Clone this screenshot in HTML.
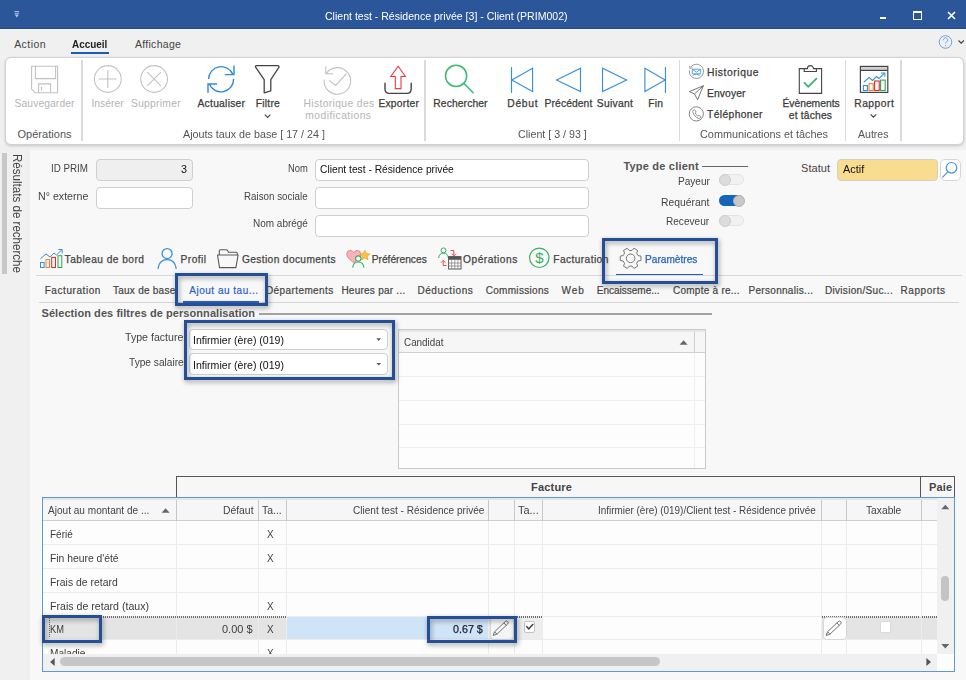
<!DOCTYPE html>
<html lang="fr"><head><meta charset="utf-8"><title>Client test - Résidence privée [3] - Client (PRIM002)</title>
<style>
html,body{margin:0;padding:0;}
body{width:966px;height:680px;overflow:hidden;background:#f0f0f0;font-family:"Liberation Sans",sans-serif;}
#app{position:relative;width:966px;height:680px;overflow:hidden;background:#f0f0f0;}
.t{position:absolute;white-space:nowrap;line-height:1;transform-origin:0 50%;}
.a{position:absolute;}
svg{position:absolute;overflow:visible;}
.inp{position:absolute;box-sizing:border-box;border:1px solid #cfcfcf;border-radius:4px;background:#fff;}
.hl{position:absolute;box-sizing:border-box;border:3px solid #244f96;filter:drop-shadow(1px 2.500px 2.500px rgba(0,0,0,.4));}
.sb{-webkit-text-stroke:0.25px currentColor;}
.sb2{-webkit-text-stroke:0.2px currentColor;}
.dot{background:repeating-linear-gradient(90deg,#6e6e6e 0,#6e6e6e 1px,transparent 1px,transparent 2px);}
.dotv{background:repeating-linear-gradient(180deg,#6e6e6e 0,#6e6e6e 1px,transparent 1px,transparent 2px);}

</style></head>
<body>
<div id="app">
<div class="a" style="left:0;top:0;width:966px;height:29px;background:#2b579a;box-sizing:border-box;border-bottom:1px solid #214c8e"></div>
<div class="a" style="left:0;top:29px;width:966px;height:1px;background:#f8f8f8"></div>
<svg style="left:14px;top:10.5px" width="6" height="7" viewBox="0 0 6 7"><path d="M0.5 0.5h4.6M0.5 2.3h4.6" stroke="#b9c6de" stroke-width="0.9" fill="none"/><path d="M0.7 3.6h4.200l-2.100 2.800z" fill="#b9c6de"/></svg>
<span class="t" style="left:324.5px;top:11.0px;font-size:11px;color:#fff;transform:scaleX(0.9582);">Client test - Résidence privée [3] - Client (PRIM002)</span>
<div class="a" style="left:879.800px;top:16.500px;width:6.400px;height:2.200px;background:#fff"></div>
<div class="a" style="left:913px;top:11.200px;width:9.200px;height:8.800px;box-sizing:border-box;border:1.200px solid #fff;border-top-width:2px"></div>
<svg style="left:946.700px;top:11.200px" width="9" height="9" viewBox="0 0 9 9"><path d="M1 1l7 7M8 1l-7 7" stroke="#fff" stroke-width="1.6" fill="none"/></svg>
<span class="t" style="left:14.2px;top:38.9px;font-size:10.5px;color:#444;letter-spacing:0.424px;">Action</span>
<span class="t" style="left:72.0px;top:38.9px;font-size:10.5px;color:#222;transform:scaleX(0.9452);font-weight:bold;">Accueil</span>
<span class="t" style="left:134.9px;top:38.9px;font-size:10.5px;color:#444;letter-spacing:0.302px;">Affichage</span>
<div class="a" style="left:71px;top:51.6px;width:38px;height:2px;background:#185abd"></div>
<svg style="left:937.500px;top:33.500px" width="28" height="16" viewBox="0 0 28 16"><circle cx="7.5" cy="8" r="6.3" fill="none" stroke="#6aa7e0" stroke-width="1"/><path d="M5.3 6.3c0-1.5 1-2.4 2.3-2.4s2.2.9 2.2 2.1c0 1.6-2.1 1.8-2.1 3.6" fill="none" stroke="#6aa7e0" stroke-width="1"/><circle cx="7.6" cy="11.6" r=".7" fill="#6aa7e0"/><path d="M20.5 6.5l2.7 2.7 2.7-2.7" fill="none" stroke="#444" stroke-width="1.1"/></svg>
<div class="a" style="left:5px;top:57px;width:958.500px;height:88px;box-sizing:border-box;background:#fff;border:1px solid #d2d2d2;border-radius:6px;box-shadow:0 1px 3px rgba(0,0,0,.18)"></div>
<div class="a" style="left:81.2px;top:60px;width:1.500px;height:81px;background:#dadada"></div>
<div class="a" style="left:424.2px;top:60px;width:1.500px;height:81px;background:#dadada"></div>
<div class="a" style="left:678.7px;top:60px;width:1.500px;height:81px;background:#dadada"></div>
<div class="a" style="left:844.7px;top:60px;width:1.500px;height:81px;background:#dadada"></div>
<div class="a" style="left:900.2px;top:60px;width:1.500px;height:81px;background:#dadada"></div>
<span class="t" style="left:14.5px;top:98.7px;font-size:10.3px;color:#b4b4b4;letter-spacing:0.103px;">Sauvegarder</span>
<span class="t" style="left:91.4px;top:98.7px;font-size:10.3px;color:#b4b4b4;letter-spacing:0.041px;">Insérer</span>
<span class="t" style="left:131.0px;top:98.7px;font-size:10.3px;color:#b4b4b4;letter-spacing:0.261px;">Supprimer</span>
<span class="t sb" style="left:197.5px;top:98.7px;font-size:10.3px;color:#3a3a3a;letter-spacing:0.253px;">Actualiser</span>
<span class="t sb" style="left:255.7px;top:98.7px;font-size:10.3px;color:#3a3a3a;letter-spacing:0.243px;">Filtre</span>
<span class="t" style="left:303.4px;top:98.7px;font-size:10.3px;color:#b4b4b4;letter-spacing:0.382px;">Historique des</span>
<span class="t" style="left:305.3px;top:110.7px;font-size:10.3px;color:#b4b4b4;letter-spacing:0.466px;">modifications</span>
<span class="t sb" style="left:378.4px;top:98.7px;font-size:10.3px;color:#3a3a3a;letter-spacing:0.225px;">Exporter</span>
<span class="t sb" style="left:433.3px;top:98.7px;font-size:10.3px;color:#3a3a3a;letter-spacing:0.107px;">Rechercher</span>
<span class="t sb" style="left:507.3px;top:98.7px;font-size:10.3px;color:#3a3a3a;letter-spacing:0.704px;">Début</span>
<span class="t sb" style="left:544.6px;top:98.7px;font-size:10.3px;color:#3a3a3a;letter-spacing:0.094px;">Précédent</span>
<span class="t sb" style="left:596.8px;top:98.7px;font-size:10.3px;color:#3a3a3a;letter-spacing:0.274px;">Suivant</span>
<span class="t sb" style="left:648.2px;top:98.7px;font-size:10.3px;color:#3a3a3a;letter-spacing:0.296px;">Fin</span>
<span class="t sb" style="left:707.0px;top:67.9px;font-size:10.3px;color:#3a3a3a;letter-spacing:0.570px;">Historique</span>
<span class="t sb" style="left:707.0px;top:88.9px;font-size:10.3px;color:#3a3a3a;letter-spacing:0.119px;">Envoyer</span>
<span class="t sb" style="left:707.0px;top:109.9px;font-size:10.3px;color:#3a3a3a;letter-spacing:0.377px;">Téléphoner</span>
<span class="t sb" style="left:782.4px;top:98.9px;font-size:10.3px;color:#3a3a3a;letter-spacing:0.006px;">Évènements</span>
<span class="t sb" style="left:788.8px;top:111.1px;font-size:10.3px;color:#3a3a3a;letter-spacing:0.176px;">et tâches</span>
<span class="t sb" style="left:854.2px;top:98.9px;font-size:10.3px;color:#3a3a3a;letter-spacing:0.510px;">Rapport</span>
<span class="t" style="left:17.4px;top:129.0px;font-size:11px;color:#555;letter-spacing:0.044px;">Opérations</span>
<span class="t" style="left:182.6px;top:129.0px;font-size:11px;color:#555;transform:scaleX(0.9751);">Ajouts taux de base [ 17 / 24 ]</span>
<span class="t" style="left:518.0px;top:129.0px;font-size:11px;color:#555;transform:scaleX(0.9701);">Client [ 3 / 93 ]</span>
<span class="t" style="left:699.5px;top:129.0px;font-size:11px;color:#555;transform:scaleX(0.9876);">Communications et tâches</span>
<span class="t" style="left:858.3px;top:129.0px;font-size:11px;color:#555;transform:scaleX(0.9594);">Autres</span>
<div class="a" style="left:1.500px;top:153px;width:5px;height:121px;background:#c8c8c8"></div>
<span class="t" style="left:10px;top:154.400px;font-size:13px;color:#444;writing-mode:vertical-rl;line-height:15px;width:15px;transform:scaleY(0.890);transform-origin:50% 0">Résultats de recherche</span>
<div class="a" style="left:30px;top:150px;width:936px;height:530px;background:#f8f8f8"></div>
<svg style="left:28px;top:62px" width="34" height="34" viewBox="28 62 34 34"><g fill="none" stroke="#c2c2c2" stroke-width="1.1"><path d="M31.6 66.3h26v26.4h-22.4l-3.6-3.6z"/><path d="M35.4 66.3v12.3h20.2v-12.3"/><path d="M38.6 92.7v-8.8h12v8.8"/><path d="M41.5 87v3.6"/></g></svg>
<svg style="left:92px;top:62px" width="80" height="34" viewBox="92 62 80 34"><g fill="none" stroke="#c2c2c2" stroke-width="1.1"><circle cx="107.8" cy="79" r="13.4"/><path d="M98.8 79h17.8M107.8 70.1v17.8"/><circle cx="154.1" cy="79" r="13.4"/><path d="M147.3 72.2l13.7 13.7M161 72.2l-13.7 13.7"/></g></svg>
<svg style="left:204px;top:62px" width="34" height="34" viewBox="204 62 34 34"><g fill="none" stroke="#2a8ad8" stroke-width="1.4"><path d="M208.6 79a12.6 12.6 0 0 1 24.3-4.4"/><path d="M224.8 74.6h9.2v-9.1"/><path d="M233.6 79a12.6 12.6 0 0 1 -24.3 4.9"/><path d="M217 84h-9v8.8"/></g></svg>
<svg style="left:252px;top:62px" width="30" height="34" viewBox="252 62 30 34"><path d="M256.8 65.6h20.8q1.6 0 1.4 1.6l-8.2 12.4v11.2l-6.6 2v-13.2l-8.6-12.4q-.6-1.6 1.2-1.6z" fill="none" stroke="#454545" stroke-width="1.3" stroke-linejoin="round"/></svg>
<svg style="left:322px;top:62px" width="32" height="34" viewBox="322 62 32 34"><g fill="none" stroke="#c2c2c2" stroke-width="1.1"><path d="M326.2 73.6a13.3 13.3 0 1 1 -2.1 5.9"/><path d="M325.8 66.3v7.4h7.3"/><path d="M329 80.4l6.7 5 10.8-11.7"/></g></svg>
<svg style="left:382px;top:62px" width="32" height="34" viewBox="382 62 32 34"><path d="M385 82.8v6.2q0 4.4 4.4 4.4h17.4q4.4 0 4.4-4.4v-6.2" fill="none" stroke="#444" stroke-width="1.4"/><path d="M398.2 66.2l7.2 10.3h-4.4v12.1h-5.7v-12.1h-4.5z" fill="none" stroke="#ee3a3a" stroke-width="1.1" stroke-linejoin="miter"/></svg>
<svg style="left:442px;top:62px" width="34" height="34" viewBox="442 62 34 34"><g fill="none" stroke="#3cb878" stroke-width="1.5"><circle cx="456.1" cy="75.9" r="10.6"/><path d="M463.8 83.2l9.8 10"/></g></svg>
<svg style="left:506px;top:62px" width="164" height="34" viewBox="506 62 164 34"><g fill="none" stroke="#3a90d8" stroke-width="1.15" stroke-linejoin="miter"><path d="M511.5 67v26"/><path d="M511.8 79.9l20.8-11.7v23.3z"/><path d="M556.6 79.9l23.9-11.7v23.3z"/><path d="M626.6 79.9l-24.1-11.7v23.3z"/><path d="M665.5 67v26"/><path d="M665.2 79.9l-20.3-11.7v23.3z"/></g></svg>
<svg style="left:686px;top:62px" width="22" height="62" viewBox="686 62 22 62"><g fill="none" stroke="#8a8a8a" stroke-width="0.9"><path d="M690.6 67.3a7.1 7.1 0 1 1 -1.2 3"/><path d="M689.6 65.8l.4 2.6 2.6-.5"/></g><g fill="none" stroke="#58a6e0" stroke-width="1"><path d="M692.3 69.2h8.4v4.6h-8.4z"/><path d="M692.3 69.4l4.2 2.6 4.2-2.6"/><path d="M692.6 75.2q3.5-2 7.6 0"/></g><path d="M689.4 91.6l14-5.9-5.8 14.1-3.1-5.8zM694.5 94l8.9-8.3" fill="none" stroke="#666" stroke-width="0.9" stroke-linejoin="round"/><circle cx="696.3" cy="113.9" r="7.1" fill="none" stroke="#777" stroke-width="0.9"/><path d="M693.4 110.2q1-1 1.7 0l.7 1.5q.2.8-.6 1.3q.8 2 2.6 3q.6-.8 1.4-.5l1.4.8q.7.8-.2 1.6q-1.4 1.2-3.600-.2q-3.200-2-4-5.800q-.2-1 .6-1.700z" fill="none" stroke="#777" stroke-width="0.8"/></svg>
<svg style="left:796px;top:60px" width="30" height="36" viewBox="796 60 30 36"><g fill="none" stroke="#444" stroke-width="1.1"><path d="M804.2 68.6h-4.9v24.8h22.3v-24.8h-5.2"/><path d="M804.2 71.5v-2.900h3.200a3 3 0 0 1 6 0h3v2.900z"/></g><path d="M804 82.200l4.200 4.600 8.700-8.600" fill="none" stroke="#2db55d" stroke-width="1.7"/></svg>
<svg style="left:858px;top:62px" width="32" height="34" viewBox="858 62 32 34"><rect x="860.4" y="66.400" width="27.400" height="4" fill="#cfcfcf"/><g fill="none" stroke="#444" stroke-width="1.2"><rect x="860.4" y="66.400" width="27.400" height="26"/><path d="M860.4 70.400h27.400"/></g><g fill="none" stroke-width="1.1"><rect x="863.4" y="85.600" width="4" height="4.900" stroke="#3a90d8"/><rect x="869" y="83.700" width="4.200" height="6.800" stroke="#f08030"/><rect x="874.600" y="81" width="4.600" height="9.500" stroke="#e02828"/><rect x="880.600" y="80.100" width="4.600" height="10.400" stroke="#2da84f"/><path d="M863.8 82.200l5.200-4.700 3.500 3 4-4 2.500 2 5.500-5.300" stroke="#3a90d8"/><path d="M881 73h3.800v3.800" stroke="#3a90d8"/></g></svg>
<svg style="left:262px;top:112px" width="12" height="8" viewBox="262 112 12 8"><path d="M264.8 114.600l2.800 2.800 2.800-2.800" fill="none" stroke="#444" stroke-width="1.100"/></svg>
<svg style="left:868px;top:112px" width="12" height="8" viewBox="868 112 12 8"><path d="M870.6 114.400l2.800 2.800 2.800-2.800" fill="none" stroke="#444" stroke-width="1.100"/></svg>
<div class="inp" style="left:96px;top:159px;width:97px;height:22px;background:#efefef;"></div>
<div class="inp" style="left:96px;top:187px;width:97px;height:22px;background:#fff;"></div>
<div class="inp" style="left:315px;top:159px;width:274px;height:22px;background:#fff;"></div>
<div class="inp" style="left:315px;top:187px;width:274px;height:22px;background:#fff;"></div>
<div class="inp" style="left:315px;top:215px;width:274px;height:22px;background:#fff;"></div>
<span class="t" style="left:51.4px;top:163.0px;font-size:11px;color:#444;transform:scaleX(0.8904);">ID PRIM</span>
<span class="t" style="left:180.6px;top:164.2px;font-size:11px;color:#111;transform:scaleX(0.9809);">3</span>
<span class="t" style="left:38.0px;top:190.7px;font-size:11px;color:#444;transform:scaleX(0.9676);">N° externe</span>
<span class="t" style="left:288.0px;top:163.0px;font-size:11px;color:#444;transform:scaleX(0.8526);">Nom</span>
<span class="t" style="left:320.4px;top:164.3px;font-size:11px;color:#111;transform:scaleX(0.9313);">Client test - Résidence privée</span>
<span class="t" style="left:244.2px;top:190.7px;font-size:11px;color:#444;transform:scaleX(0.8891);">Raison sociale</span>
<span class="t" style="left:252.9px;top:218.3px;font-size:11px;color:#444;transform:scaleX(0.9070);">Nom abrégé</span>
<span class="t" style="left:623.4px;top:160.5px;font-size:11px;color:#555;letter-spacing:0.205px;font-weight:bold;">Type de client</span>
<div class="a" style="left:701.500px;top:165.700px;width:46px;height:1px;background:#666"></div>
<span class="t" style="left:677.5px;top:175.9px;font-size:11px;color:#444;transform:scaleX(0.9153);">Payeur</span>
<span class="t" style="left:661.4px;top:196.5px;font-size:11px;color:#444;transform:scaleX(0.9423);">Requérant</span>
<span class="t" style="left:666.3px;top:216.4px;font-size:11px;color:#444;transform:scaleX(0.9156);">Receveur</span>
<div class="a" style="left:718.5px;top:174.2px;width:25px;height:11px;border-radius:6px;background:#f1f1f1;box-sizing:border-box;border:1px solid #e4e4e4"></div>
<div class="a" style="left:718.5px;top:173.7px;width:12px;height:12px;border-radius:6px;background:#dcdcdc;box-sizing:border-box;border:1px solid #cdcdcd"></div>
<div class="a" style="left:718.5px;top:195.2px;width:25px;height:11px;border-radius:6px;background:#1565b8"></div>
<div class="a" style="left:732.5px;top:194.7px;width:12px;height:12px;border-radius:6px;background:#c8c8c8;box-sizing:border-box;border:1px solid #b5b5b5"></div>
<div class="a" style="left:718.5px;top:215.1px;width:25px;height:11px;border-radius:6px;background:#f1f1f1;box-sizing:border-box;border:1px solid #e4e4e4"></div>
<div class="a" style="left:718.5px;top:214.6px;width:12px;height:12px;border-radius:6px;background:#dcdcdc;box-sizing:border-box;border:1px solid #cdcdcd"></div>
<span class="t" style="left:801.0px;top:163.0px;font-size:11px;color:#444;letter-spacing:0.052px;">Statut</span>
<div class="inp" style="left:837px;top:159px;width:100.5px;height:21.5px;background:#f8dc8f;border-color:#d2d0c8"></div>
<span class="t" style="left:842.7px;top:164.0px;font-size:11px;color:#111;transform:scaleX(0.9910);">Actif</span>
<div class="inp" style="left:939.5px;top:159px;width:21.0px;height:22px;background:#fff;border-radius:5px;border-color:#d6d6d6"></div>
<svg style="left:940px;top:160px" width="20" height="20" viewBox="940 160 20 20"><g fill="none" stroke="#4a8fd0" stroke-width="1.2"><circle cx="951.500" cy="167.800" r="5.300"/><path d="M947.800 171.800l-5.400 5.600"/></g></svg>
<span class="t sb" style="left:64.6px;top:254.6px;font-size:10.2px;color:#444;letter-spacing:0.453px;">Tableau de bord</span>
<span class="t sb" style="left:180.6px;top:254.6px;font-size:10.2px;color:#444;letter-spacing:0.432px;">Profil</span>
<span class="t sb" style="left:242.0px;top:254.6px;font-size:10.2px;color:#444;letter-spacing:0.364px;">Gestion documents</span>
<span class="t sb" style="left:371.7px;top:254.6px;font-size:10.2px;color:#444;letter-spacing:0.011px;">Préférences</span>
<span class="t sb" style="left:463.1px;top:254.6px;font-size:10.2px;color:#444;letter-spacing:0.479px;">Opérations</span>
<span class="t sb" style="left:553.3px;top:254.6px;font-size:10.2px;color:#444;letter-spacing:0.408px;">Facturation</span>
<span class="t sb" style="left:644.5px;top:254.6px;font-size:10.2px;color:#2a62c8;transform:scaleX(0.9940);">Paramètres</span>
<div class="a" style="left:616px;top:273.600px;width:87px;height:2.500px;background:#2a5ab4"></div>
<div class="a" style="left:36px;top:275px;width:926px;height:1px;background:#d9d9d9"></div>
<span class="t sb2" style="left:44.7px;top:286.4px;font-size:10px;color:#444;letter-spacing:0.568px;">Facturation</span>
<span class="t sb2" style="left:113.0px;top:286.4px;font-size:10px;color:#444;letter-spacing:0.247px;">Taux de base</span>
<span class="t sb2" style="left:189.3px;top:286.4px;font-size:10px;color:#2a62c8;letter-spacing:0.507px;">Ajout au tau...</span>
<span class="t sb2" style="left:266.0px;top:286.4px;font-size:10px;color:#444;letter-spacing:0.400px;">Départements</span>
<span class="t sb2" style="left:341.4px;top:286.4px;font-size:10px;color:#444;letter-spacing:0.248px;">Heures par ...</span>
<span class="t sb2" style="left:417.4px;top:286.4px;font-size:10px;color:#444;letter-spacing:0.597px;">Déductions</span>
<span class="t sb2" style="left:485.7px;top:286.4px;font-size:10px;color:#444;letter-spacing:0.309px;">Commissions</span>
<span class="t sb2" style="left:561.5px;top:286.4px;font-size:10px;color:#444;letter-spacing:1.010px;">Web</span>
<span class="t sb2" style="left:596.8px;top:286.4px;font-size:10px;color:#444;letter-spacing:0.000px;">Encaisseme...</span>
<span class="t sb2" style="left:673.0px;top:286.4px;font-size:10px;color:#444;letter-spacing:0.250px;">Compte à re...</span>
<span class="t sb2" style="left:748.5px;top:286.4px;font-size:10px;color:#444;letter-spacing:0.301px;">Personnalis...</span>
<span class="t sb2" style="left:824.9px;top:286.4px;font-size:10px;color:#444;letter-spacing:0.318px;">Division/Suc...</span>
<span class="t sb2" style="left:900.5px;top:286.4px;font-size:10px;color:#444;letter-spacing:0.575px;">Rapports</span>
<div class="a" style="left:39px;top:302px;width:919.500px;height:1px;background:#d4d4d4"></div>
<div class="a" style="left:183px;top:300.5px;width:76px;height:2px;background:#2a5fbe"></div>
<span class="t" style="left:41.5px;top:307.9px;font-size:11px;color:#555;letter-spacing:0.066px;font-weight:bold;">Sélection des filtres de personnalisation</span>
<div class="a" style="left:258.500px;top:313.300px;width:453px;height:1.500px;background:#a2a2a2"></div>
<span class="t" style="left:125.0px;top:332.0px;font-size:11px;color:#444;transform:scaleX(0.9649);">Type facture</span>
<span class="t" style="left:128.7px;top:356.8px;font-size:11px;color:#444;transform:scaleX(0.9224);">Type salaire</span>
<div class="inp" style="left:189px;top:328.8px;width:199px;height:21.19999999999999px;background:#fff;"></div>
<div class="inp" style="left:189px;top:353.4px;width:199px;height:21.200000000000045px;background:#fff;"></div>
<span class="t" style="left:192.5px;top:334.7px;font-size:11px;color:#111;transform:scaleX(0.9606);">Infirmier (ère) (019)</span>
<span class="t" style="left:192.5px;top:360.0px;font-size:11px;color:#111;transform:scaleX(0.9606);">Infirmier (ère) (019)</span>
<svg style="left:374px;top:336px" width="10" height="32" viewBox="374 336 10 32"><path d="M376.400 338.300h4.600l-2.300 2.600zM376.400 362.900h4.600l-2.300 2.600z" fill="#555"/></svg>
<div class="a" style="left:398px;top:329px;width:308px;height:140px;box-sizing:border-box;border:1px solid #c9c9c9;background:#fdfdfd"></div>
<div class="a" style="left:399px;top:330px;width:306px;height:23px;background:#f6f6f6;border-bottom:1px solid #d0d0d0;box-sizing:border-box"></div>
<div class="a" style="left:399px;top:330px;width:306px;height:2px;background:#e6e6e6"></div>
<div class="a" style="left:399px;top:375.8px;width:306px;height:1px;background:#efefef"></div>
<div class="a" style="left:399px;top:399.7px;width:306px;height:1px;background:#efefef"></div>
<div class="a" style="left:399px;top:423.5px;width:306px;height:1px;background:#efefef"></div>
<div class="a" style="left:399px;top:447.3px;width:306px;height:1px;background:#efefef"></div>
<div class="a" style="left:693.5px;top:332px;width:1px;height:21px;background:#cfcfcf"></div>
<div class="a" style="left:693.5px;top:353px;width:1px;height:115px;background:#efefef"></div>
<span class="t" style="left:403.5px;top:336.5px;font-size:11px;color:#444;transform:scaleX(0.8971);">Candidat</span>
<svg style="left:679px;top:338px" width="10" height="8" viewBox="679 338 10 8"><path d="M679.600 344.800l4-4.600 4 4.600z" fill="#666"/></svg>
<div class="a" style="left:176px;top:476px;width:779px;height:21px;box-sizing:border-box;border:1px solid #555;border-bottom:none;background:#f7f7f7"></div>
<div class="a" style="left:920px;top:476px;width:1px;height:21px;background:#555"></div>
<span class="t" style="left:531.1px;top:482.3px;font-size:11px;color:#444;letter-spacing:0.178px;font-weight:bold;">Facture</span>
<span class="t" style="left:929.1px;top:482.3px;font-size:11px;color:#444;letter-spacing:0.124px;font-weight:bold;">Paie</span>
<div class="a" style="left:42px;top:497px;width:913px;height:174.5px;box-sizing:border-box;border:1px solid #5b9bd5;background:#fdfdfd"></div>
<div class="a" style="left:43px;top:498px;width:894px;height:23px;background:#f6f6f6;border-bottom:1px solid #cfcfcf;box-sizing:border-box"></div>
<div class="a" style="left:43px;top:498px;width:894px;height:2px;background:#e4e4e4"></div>
<div class="a" style="left:43px;top:616.5px;width:894px;height:23px;background:#e4e4e4"></div>
<div class="a" style="left:286.5px;top:616.5px;width:202px;height:23px;background:#cfe4f7"></div>
<div class="a" style="left:514.5px;top:616.5px;width:307px;height:23px;background:#fdfdfd"></div>
<div class="a" style="left:514.5px;top:616.5px;width:28px;height:23px;background:#ededed"></div>
<div class="a" style="left:43px;top:544.3px;width:894px;height:1px;background:#ececec"></div>
<div class="a" style="left:43px;top:568.1px;width:894px;height:1px;background:#ececec"></div>
<div class="a" style="left:43px;top:591.9px;width:894px;height:1px;background:#ececec"></div>
<div class="a" style="left:43px;top:615.5px;width:894px;height:1px;background:#ececec"></div>
<div class="a" style="left:43px;top:639.3px;width:894px;height:1px;background:#ececec"></div>
<div class="a" style="left:176.0px;top:500px;width:1px;height:21px;background:#c8c8c8"></div>
<div class="a" style="left:176.0px;top:521px;width:1px;height:132.5px;background:#ececec"></div>
<div class="a" style="left:257.5px;top:500px;width:1px;height:21px;background:#c8c8c8"></div>
<div class="a" style="left:257.5px;top:521px;width:1px;height:132.5px;background:#ececec"></div>
<div class="a" style="left:286.0px;top:500px;width:1px;height:21px;background:#c8c8c8"></div>
<div class="a" style="left:286.0px;top:521px;width:1px;height:132.5px;background:#ececec"></div>
<div class="a" style="left:488.0px;top:500px;width:1px;height:21px;background:#c8c8c8"></div>
<div class="a" style="left:488.0px;top:521px;width:1px;height:132.5px;background:#ececec"></div>
<div class="a" style="left:514.0px;top:500px;width:1px;height:21px;background:#c8c8c8"></div>
<div class="a" style="left:514.0px;top:521px;width:1px;height:132.5px;background:#ececec"></div>
<div class="a" style="left:542.0px;top:500px;width:1px;height:21px;background:#c8c8c8"></div>
<div class="a" style="left:542.0px;top:521px;width:1px;height:132.5px;background:#ececec"></div>
<div class="a" style="left:821.0px;top:500px;width:1px;height:21px;background:#c8c8c8"></div>
<div class="a" style="left:821.0px;top:521px;width:1px;height:132.5px;background:#ececec"></div>
<div class="a" style="left:846.0px;top:500px;width:1px;height:21px;background:#c8c8c8"></div>
<div class="a" style="left:846.0px;top:521px;width:1px;height:132.5px;background:#ececec"></div>
<div class="a" style="left:920.5px;top:500px;width:1px;height:21px;background:#c8c8c8"></div>
<div class="a" style="left:920.5px;top:521px;width:1px;height:132.5px;background:#ececec"></div>
<div class="a dot" style="left:43px;top:616px;width:244px;height:2px"></div>
<div class="a dotv" style="left:48.500px;top:618px;width:1px;height:20px"></div>
<div class="a dot" style="left:515px;top:616px;width:27px;height:2px"></div>
<div class="a dot" style="left:822px;top:616px;width:98px;height:2px"></div><div class="a dot" style="left:922px;top:616px;width:15px;height:2px"></div>
<span class="t" style="left:47.6px;top:505.0px;font-size:11px;color:#444;transform:scaleX(0.9153);">Ajout au montant de ...</span>
<svg style="left:161px;top:506px" width="10" height="8" viewBox="161 506 10 8"><path d="M161.600 512.800l4-4.600 4 4.600z" fill="#666"/></svg>
<span class="t" style="left:222.5px;top:505.0px;font-size:11px;color:#444;transform:scaleX(0.9412);">Défaut</span>
<span class="t" style="left:261.7px;top:505.0px;font-size:11px;color:#444;transform:scaleX(0.9478);">Ta...</span>
<span class="t" style="left:352.6px;top:505.0px;font-size:11px;color:#444;transform:scaleX(0.9146);">Client test - Résidence privée</span>
<span class="t" style="left:518.2px;top:505.0px;font-size:11px;color:#444;transform:scaleX(0.9959);">Ta...</span>
<span class="t" style="left:598.4px;top:505.0px;font-size:11px;color:#444;transform:scaleX(0.9016);">Infirmier (ère) (019)/Client test - Résidence privée</span>
<span class="t" style="left:865.7px;top:505.0px;font-size:11px;color:#444;transform:scaleX(0.9311);">Taxable</span>
<span class="t" style="left:49.5px;top:529.2px;font-size:11px;color:#3c3c3c;transform:scaleX(0.9058);">Férié</span>
<span class="t" style="left:49.5px;top:552.9px;font-size:11px;color:#3c3c3c;transform:scaleX(0.9393);">Fin heure d&#x27;été</span>
<span class="t" style="left:49.5px;top:576.7px;font-size:11px;color:#3c3c3c;transform:scaleX(0.9466);">Frais de retard</span>
<span class="t" style="left:49.5px;top:600.5px;font-size:11px;color:#3c3c3c;transform:scaleX(0.9640);">Frais de retard (taux)</span>
<span class="t" style="left:49.5px;top:623.9px;font-size:11px;color:#3c3c3c;transform:scaleX(0.8424);">KM</span>
<span class="t" style="left:221.5px;top:623.9px;font-size:11px;color:#3c3c3c;transform:scaleX(0.9974);">0.00 $</span>
<span class="t sb" style="left:453.0px;top:623.9px;font-size:11px;color:#1c1c30;transform:scaleX(0.9745);">0.67 $</span>
<span class="t" style="left:267.3px;top:529.2px;font-size:11px;color:#3c3c3c;transform:scaleX(0.8995);">X</span>
<span class="t" style="left:267.3px;top:552.9px;font-size:11px;color:#3c3c3c;transform:scaleX(0.8995);">X</span>
<span class="t" style="left:267.3px;top:600.5px;font-size:11px;color:#3c3c3c;transform:scaleX(0.8995);">X</span>
<span class="t" style="left:267.3px;top:623.9px;font-size:11px;color:#3c3c3c;transform:scaleX(0.8995);">X</span>
<div class="a" style="left:43px;top:640px;width:894px;height:13.5px;overflow:hidden"><span class="t" style="left:6.5px;top:7.600px;font-size:11px;color:#3c3c3c;transform:scaleX(0.920)">Maladie</span><span class="t" style="left:224.300px;top:7.600px;font-size:11px;color:#3c3c3c;transform:scaleX(0.900)">X</span></div>
<div class="inp" style="left:489.5px;top:617px;width:24px;height:22.5px;border-color:#d6d6d6;background:#f6f6f6"></div>
<div class="inp" style="left:822.5px;top:617px;width:24px;height:22.5px;border-color:#d6d6d6;background:#fff"></div>
<svg style="left:492px;top:618.5px" width="18" height="18" viewBox="492 618.5 18 18"><g transform="translate(501 627.5) rotate(-43.5)" fill="none" stroke="#6a6a6a" stroke-width="0.9" stroke-linejoin="round"><path d="M-10.800 0l3.600-1.700h14.600q1.900 0 1.900 1.700t-1.900 1.700h-14.600z"/><path d="M-7.200-1.700v3.400M5.600-1.700v3.400"/></g></svg>
<svg style="left:825.3px;top:618.5px" width="18" height="18" viewBox="825.3 618.5 18 18"><g transform="translate(834.3 627.5) rotate(-43.5)" fill="none" stroke="#6a6a6a" stroke-width="0.9" stroke-linejoin="round"><path d="M-10.800 0l3.600-1.700h14.600q1.900 0 1.900 1.700t-1.900 1.700h-14.600z"/><path d="M-7.200-1.700v3.400M5.600-1.700v3.400"/></g></svg>
<div class="a" style="left:523.5px;top:620.5px;width:11.5px;height:12px;box-sizing:border-box;border:1px solid #c4c4c4;border-radius:2px;background:#fff"></div>
<svg style="left:524px;top:621px" width="11" height="11" viewBox="524 621 11 11"><path d="M526.300 626.200l2.500 2.600 4.400-4.900" fill="none" stroke="#444" stroke-width="1.500"/></svg>
<div class="a" style="left:879.5px;top:620.5px;width:11.5px;height:12px;box-sizing:border-box;border:1px solid #dadada;border-radius:2px;background:#fff"></div>
<div class="a" style="left:937px;top:498px;width:17px;height:155.5px;background:#f0f0f0"></div>
<svg style="left:940px;top:503px" width="10" height="8" viewBox="940 503 10 8"><path d="M941.300 509.300l4-4.600 4 4.600z" fill="#666"/></svg>
<svg style="left:940px;top:640px" width="10" height="10" viewBox="940 640 10 10"><path d="M941.300 644l4 4.600 4-4.600z" fill="#666"/></svg>
<div class="a" style="left:941px;top:576px;width:8px;height:25px;border-radius:4px;background:#c4c4c4"></div>
<div class="a" style="left:43px;top:653.500px;width:894px;height:17px;background:#f0f0f0"></div>
<svg style="left:48px;top:657px" width="8" height="10" viewBox="48 657 8 10"><path d="M54.700 658l-4.600 4 4.600 4z" fill="#555"/></svg>
<svg style="left:924px;top:657px" width="8" height="10" viewBox="924 657 8 10"><path d="M926.400 658l4.600 4-4.600 4z" fill="#555"/></svg>
<div class="a" style="left:60px;top:657.200px;width:600px;height:9px;border-radius:4.500px;background:#c6c6c6"></div>
<div class="hl" style="left:602px;top:238.1px;width:116.2px;height:45.7px"></div>
<div class="hl" style="left:175.1px;top:273.3px;width:92.9px;height:32.3px"></div>
<div class="hl" style="left:184px;top:320px;width:211.2px;height:60.2px"></div>
<div class="hl" style="left:42px;top:614.7px;width:60.4px;height:27.9px"></div>
<div class="hl" style="left:427.4px;top:616.3px;width:89.2px;height:26.4px"></div>
<svg style="left:38px;top:246px" width="28" height="24" viewBox="38 246 28 24"><g fill="none" stroke-width="1"><rect x="40.500" y="262.500" width="3.600" height="5" stroke="#3a90d8"/><rect x="46" y="259.600" width="3.500" height="7.900" stroke="#f08030"/><rect x="51.700" y="257.400" width="3.800" height="10.100" stroke="#e02828"/><rect x="58" y="255.700" width="3.800" height="11.800" stroke="#2da84f"/><path d="M40.500 258.700l5.500-4.700 4 3 4-4 2.500 2 5.500-5.400" stroke="#3a90d8"/><path d="M58.400 249.500h3.800v3.800" stroke="#3a90d8"/></g></svg>
<svg style="left:155px;top:246px" width="26" height="26" viewBox="155 246 26 26"><g fill="none" stroke="#3a90d8" stroke-width="1.300"><circle cx="167.100" cy="253.600" r="5"/><path d="M157.900 268.800q1.200-9.200 9.200-9.200t9.200 9.200"/></g></svg>
<svg style="left:215px;top:247px" width="26" height="24" viewBox="215 247 26 24"><g fill="none" stroke="#5a5a5a" stroke-width="1.100" stroke-linejoin="round"><path d="M219.300 255v-4.200q0-1 1-1h5.800q1 0 1.600 1l.8 1.500h7.600q1.200 0 1.200 1.200v1.500"/><path d="M217.500 255h20.600l-2.200 12.600h-16.400z"/></g></svg>
<svg style="left:344px;top:247px" width="28" height="24" viewBox="344 247 28 24"><path d="M353.700 262.800q-7-5-7-8.800q0-3.600 3.400-3.600q2.400 0 3.600 2.300q1.200-2.300 3.600-2.300q3.400 0 3.400 3.600q0 3.800-7 8.800z" fill="#f6b4b8" stroke="#ec7078" stroke-width="0.800"/><path d="M364.800 250.200l1.500 3.300 3.600.4-2.700 2.400.8 3.500-3.200-1.800-3.200 1.800.8-3.500-2.700-2.400 3.600-.4z" fill="#f8c04a" stroke="#f0a020" stroke-width="0.700"/><g fill="#fff" stroke="#34b060" stroke-width="1.100"><circle cx="358.300" cy="258.600" r="2.700"/><path d="M352.700 267.600q.6-5.600 5.600-5.600t5.600 5.600" fill="none"/></g></svg>
<svg style="left:436px;top:246px" width="28" height="26" viewBox="436 246 28 26"><g fill="none" stroke="#34b060" stroke-width="1"><circle cx="443.500" cy="250.400" r="2.500"/><path d="M438.600 258q.5-4.800 4.900-4.800t4.900 4.800"/></g><g fill="none" stroke="#ea4a4a" stroke-width="1"><path d="M450.500 250.500h3.300v5M451.600 253.800l2.200 2.200 2.200-2.200"/><path d="M446.500 265.500h-3.300v-5M441 262.600l2.200-2.200 2.200 2.200"/></g><rect x="448.600" y="256.600" width="12.400" height="12.400" fill="#fff" stroke="#555" stroke-width="1"/><rect x="448.600" y="256.600" width="12.400" height="3.200" fill="#555"/><path d="M451.700 260v9M454.800 260v9M457.900 260v9M448.600 263h12.400M448.600 266h12.400" stroke="#777" stroke-width="0.700"/></svg>
<svg style="left:528px;top:246px" width="24" height="24" viewBox="528 246 24 24"><circle cx="539.300" cy="257.800" r="9.700" fill="none" stroke="#34b060" stroke-width="1.200"/><text x="539.300" y="263.200" font-size="15" text-anchor="middle" fill="#34b060" font-family="Liberation Sans, sans-serif">$</text></svg>
<svg style="left:618px;top:246px" width="26" height="26" viewBox="618 246 26 26"><path d="M638.02 255.60 L640.97 256.10 L640.97 260.50 L638.02 261.00 L636.65 263.38 L637.69 266.18 L633.88 268.38 L631.97 266.08 L629.23 266.08 L627.32 268.38 L623.51 266.18 L624.55 263.38 L623.18 261.00 L620.23 260.50 L620.23 256.10 L623.18 255.60 L624.55 253.22 L623.51 250.42 L627.32 248.22 L629.23 250.52 L631.97 250.52 L633.88 248.22 L637.69 250.42 L636.65 253.22Z" fill="none" stroke="#777" stroke-width="1" stroke-linejoin="round"/><circle cx="630.600" cy="258.300" r="4.300" fill="none" stroke="#777" stroke-width="1"/></svg>
</div>
</body></html>
